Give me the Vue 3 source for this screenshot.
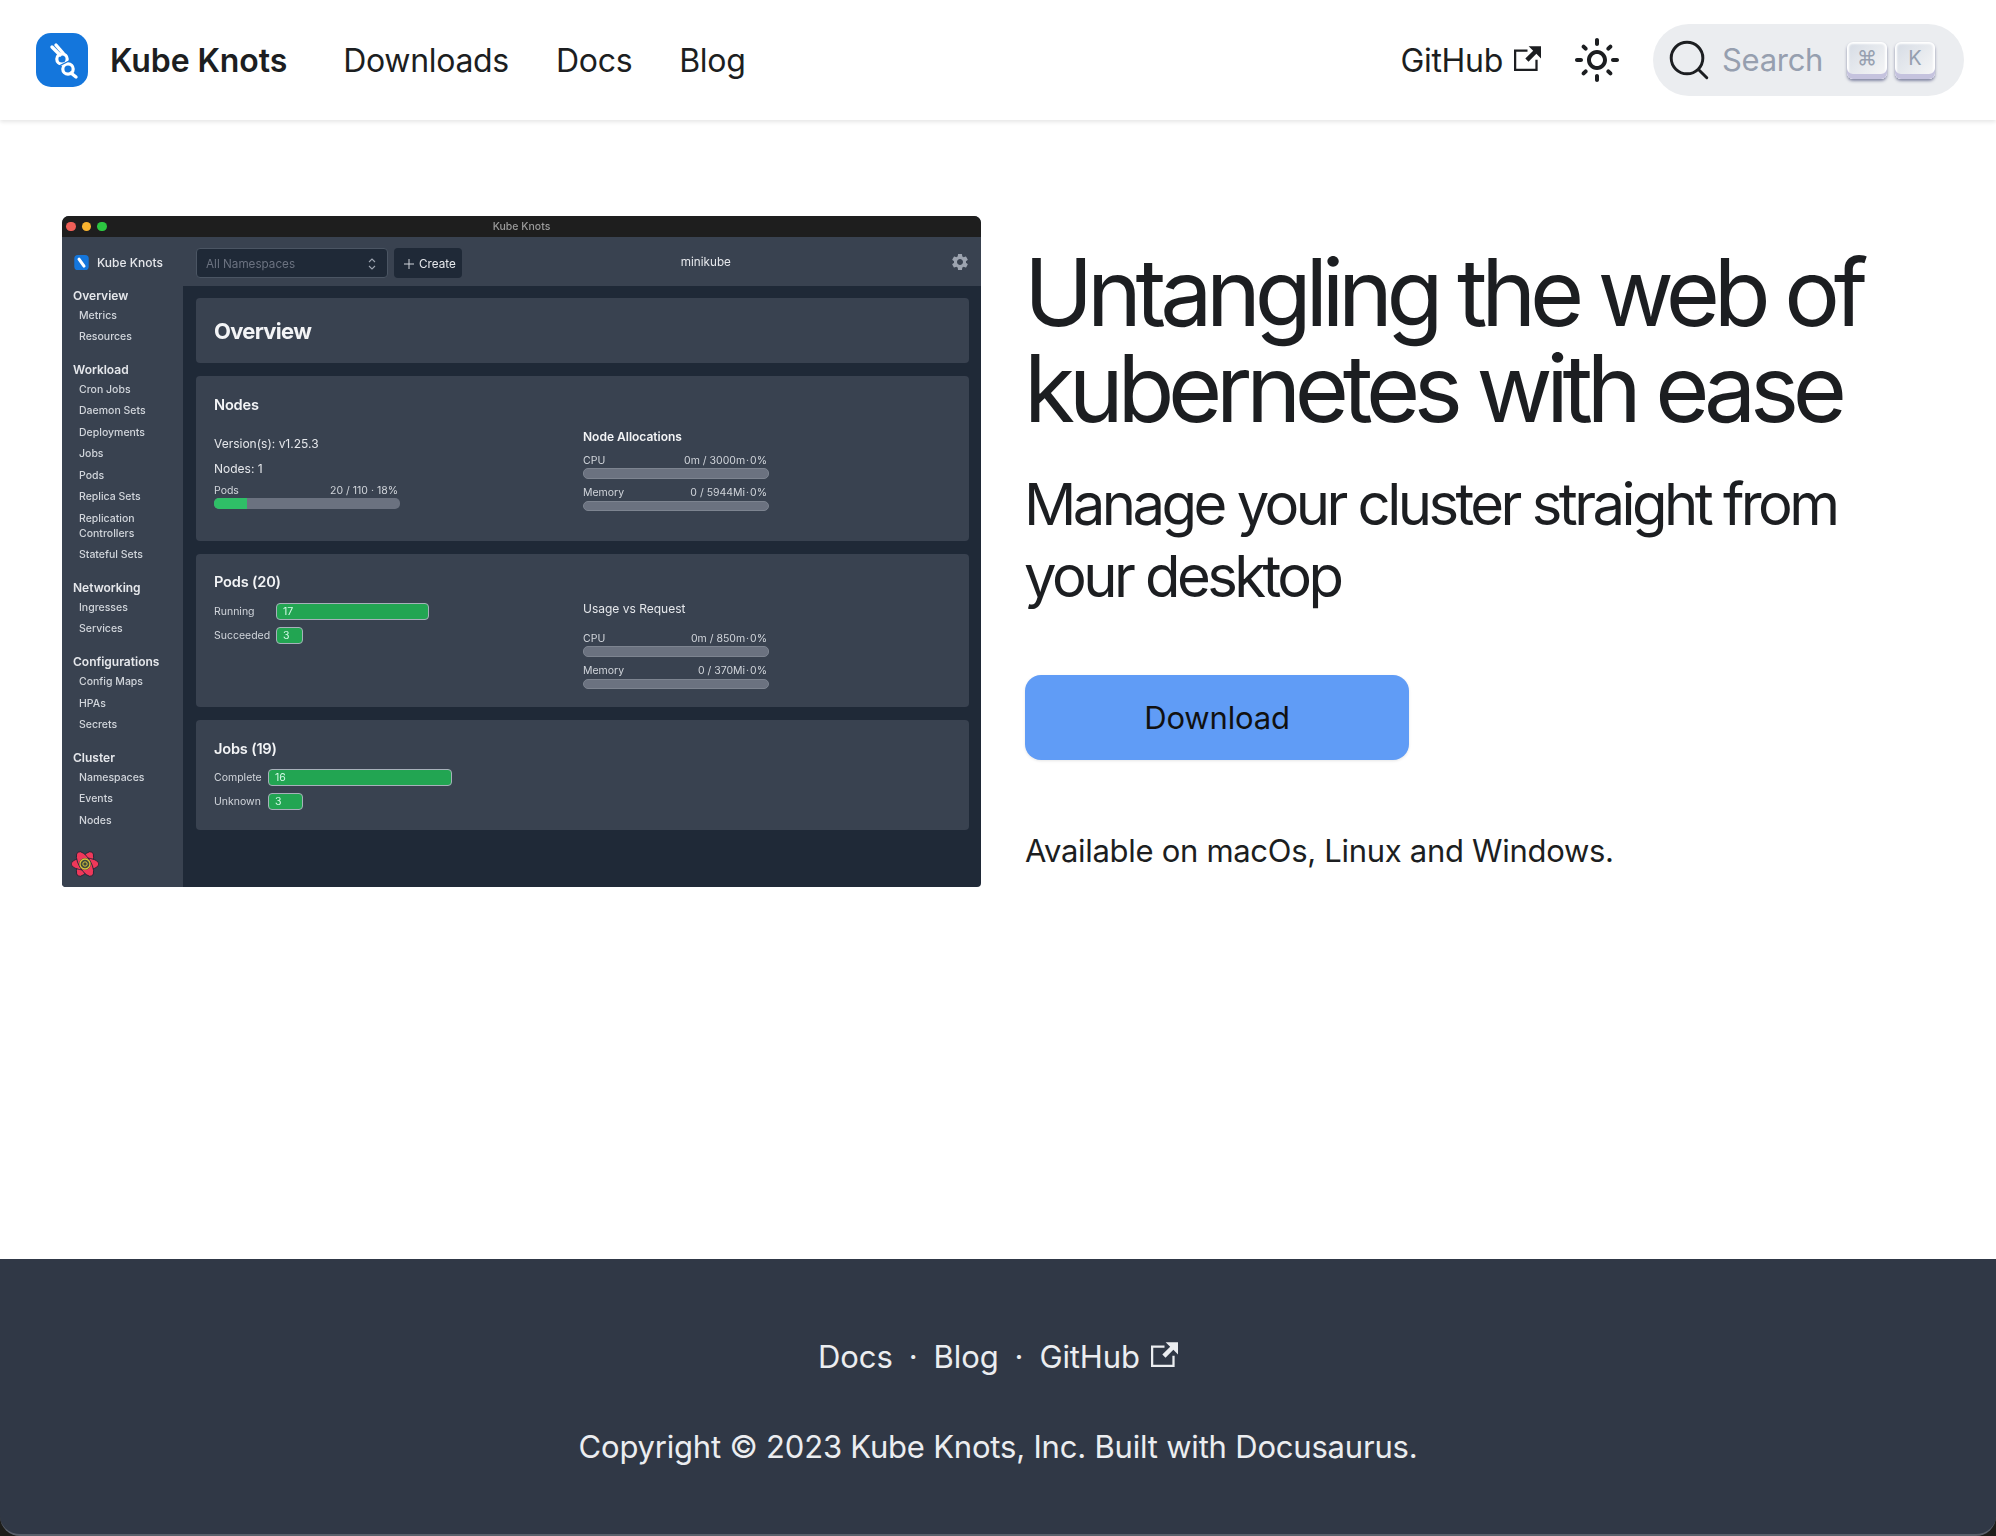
<template>
  <div class="page">
    <nav class="navbar">
      <div class="nav-left">
        <a class="brand">
          <svg class="logo" viewBox="0 0 52 54">
            <rect width="52" height="54" rx="15" fill="#1476dc" />
            <g fill="none" stroke="#fff" stroke-linecap="round">
              <path d="M16 14 L24 22 M20 12 L27 20 M35 40 L40 44" stroke-width="3.4" />
              <circle cx="26" cy="26" r="5.2" stroke-width="3.2" />
              <circle cx="32" cy="36" r="5.2" stroke-width="3.2" />
            </g>
            <path d="M23 33 L33 28" stroke="#1476dc" stroke-width="1.3" />
          </svg>
          <span class="brand-name">Kube Knots</span>
        </a>
        <a v-for="link in navLinks" :key="link" class="nav-link">{{ link }}</a>
      </div>
      <div class="nav-right">
        <a class="nav-link github">GitHub
          <svg class="ext" viewBox="0 0 24 24"><path fill="currentColor" d="M21 13v10h-21v-19h12v2h-10v15h17v-8h2zm3-12h-10.988l4.035 4-6.977 7.07 2.828 2.828 6.977-7.07 4.125 4.172v-11z" /></svg>
        </a>
        <svg class="sun" viewBox="0 0 24 24"><path fill="currentColor" d="M12,9c1.65,0,3,1.35,3,3s-1.35,3-3,3s-3-1.35-3-3S10.35,9,12,9 M12,7c-2.76,0-5,2.24-5,5s2.24,5,5,5s5-2.24,5-5 S14.76,7,12,7L12,7z M2,13l2,0c0.55,0,1-0.45,1-1s-0.45-1-1-1l-2,0c-0.55,0-1,0.45-1,1S1.45,13,2,13z M20,13l2,0c0.55,0,1-0.45,1-1 s-0.45-1-1-1l-2,0c-0.55,0-1,0.45-1,1S19.45,13,20,13z M11,2v2c0,0.55,0.45,1,1,1s1-0.45,1-1V2c0-0.55-0.45-1-1-1S11,1.45,11,2z M11,20v2c0,0.55,0.45,1,1,1s1-0.45,1-1v-2c0-0.55-0.45-1-1-1C11.45,19,11,19.45,11,20z M5.99,4.58c-0.39-0.39-1.03-0.39-1.41,0 c-0.39,0.39-0.39,1.03,0,1.41l1.06,1.06c0.39,0.39,1.03,0.39,1.41,0s0.39-1.03,0-1.41L5.99,4.58z M18.36,16.95 c-0.39-0.39-1.03-0.39-1.41,0c-0.39,0.39-0.39,1.03,0,1.41l1.06,1.06c0.39,0.39,1.03,0.39,1.41,0c0.39-0.39,0.39-1.03,0-1.41 L18.36,16.95z M19.42,5.99c0.39-0.39,0.39-1.03,0-1.41c-0.39-0.39-1.03-0.39-1.41,0l-1.06,1.06c-0.39,0.39-0.39,1.03,0,1.41 s1.03,0.39,1.41,0L19.42,5.99z M7.05,18.36c0.39-0.39,0.39-1.03,0-1.41c-0.39-0.39-1.03-0.39-1.41,0l-1.06,1.06 c-0.39,0.39-0.39,1.03,0,1.41s1.03,0.39,1.41,0L7.05,18.36z" /></svg>
        <div class="search">
          <svg class="search-icon" viewBox="0 0 20 20"><path d="M14.386 14.386l4.0877 4.0877-4.0877-4.0877c-2.9418 2.9419-7.7115 2.9419-10.6533 0-2.9419-2.9418-2.9419-7.7115 0-10.6533 2.9418-2.9419 7.7115-2.9419 10.6533 0 2.9419 2.9418 2.9419 7.7115 0 10.6533z" stroke="currentColor" fill="none" fill-rule="evenodd" stroke-linecap="round" stroke-linejoin="round" /></svg>
          <span class="search-text">Search</span>
          <span class="keys">
            <kbd class="key">⌘</kbd>
            <kbd class="key">K</kbd>
          </span>
        </div>
      </div>
    </nav>

    <main class="hero">
      <div class="shot">
        <div class="titlebar">
          <div class="lights">
            <i class="light red"></i>
            <i class="light yellow"></i>
            <i class="light green"></i>
          </div>
          <span class="window-title">Kube Knots</span>
        </div>
        <div class="app">
          <aside class="sidebar">
            <div class="side-brand">
              <svg class="side-logo" viewBox="0 0 52 54">
                <rect width="52" height="54" rx="13" fill="#1476dc" />
                <path d="M17 15 L35 40" stroke="#fff" stroke-width="11" stroke-linecap="round" />
              </svg>
              <span>Kube Knots</span>
            </div>
            <div v-for="group in sideGroups" :key="group.title" class="side-group">
              <div class="side-title">{{ group.title }}</div>
              <div v-for="item in group.items" :key="item" class="side-item">{{ item }}</div>
            </div>
            <svg class="atom" viewBox="0 0 28 28">
              <g fill="#f0385a" stroke="#1b2535" stroke-width=".8">
                <ellipse cx="14" cy="14" rx="6" ry="13.8" transform="rotate(30 14 14)" />
                <ellipse cx="14" cy="14" rx="6" ry="13.8" transform="rotate(90 14 14)" />
                <ellipse cx="14" cy="14" rx="6" ry="13.8" transform="rotate(150 14 14)" />
              </g>
              <circle cx="14" cy="14" r="6" fill="#3d4a3c" />
              <circle cx="14" cy="14" r="5" fill="none" stroke="#d9c23a" stroke-width="1.3" />
              <circle cx="14" cy="14" r="2.2" fill="none" stroke="#d9c23a" stroke-width="1" />
            </svg>
          </aside>
          <div class="app-body">
            <div class="toolbar">
              <div class="select">
                <span>All Namespaces</span>
                <svg class="updown" viewBox="0 0 10 16"><path d="M2 6 L5 3 L8 6 M2 10 L5 13 L8 10" fill="none" stroke="#9ca3af" stroke-width="1.1" /></svg>
              </div>
              <div class="create">
                <svg class="plus" viewBox="0 0 12 12"><path d="M6 1 V11 M1 6 H11" stroke="#d1d5db" stroke-width="1" /></svg>
                <span>Create</span>
              </div>
              <span class="cluster">minikube</span>
              <svg class="gear" viewBox="0 0 24 24"><path fill="#9ca3af" d="M19.14 12.94c.04-.3.06-.61.06-.94 0-.32-.02-.64-.07-.94l2.03-1.58a.49.49 0 0 0 .12-.61l-1.92-3.32a.488.488 0 0 0-.59-.22l-2.39.96c-.5-.38-1.03-.7-1.62-.94l-.36-2.54a.484.484 0 0 0-.48-.41h-3.84c-.24 0-.43.17-.47.41l-.36 2.54c-.59.24-1.13.57-1.62.94l-2.39-.96c-.22-.08-.47 0-.59.22L2.74 8.87c-.12.21-.08.47.12.61l2.03 1.58c-.05.3-.09.63-.09.94s.02.64.07.94l-2.03 1.58a.49.49 0 0 0-.12.61l1.92 3.32c.12.22.37.29.59.22l2.39-.96c.5.38 1.03.7 1.62.94l.36 2.54c.05.24.24.41.48.41h3.84c.24 0 .44-.17.47-.41l.36-2.54c.59-.24 1.13-.56 1.62-.94l2.39.96c.22.08.47 0 .59-.22l1.92-3.32c.12-.22.07-.47-.12-.61l-2.01-1.58zM12 15.6c-1.98 0-3.6-1.62-3.6-3.6s1.62-3.6 3.6-3.6 3.6 1.62 3.6 3.6-1.62 3.6-3.6 3.6z" /></svg>
            </div>
            <div class="content">
              <section class="card overview"><h2>Overview</h2></section>

              <section class="card nodes">
                <div class="col">
                  <h3>Nodes</h3>
                  <p class="line first">Version(s): v1.25.3</p>
                  <p class="line">Nodes: 1</p>
                  <div class="meter pods-meter">
                    <div class="meter-label"><span>Pods</span><span>20 / 110 · 18%</span></div>
                    <div class="track"><div class="fill" :style="{ width: '18%' }"></div></div>
                  </div>
                </div>
                <div class="col side-col alloc">
                  <h4>Node Allocations</h4>
                  <div v-for="m in allocations" :key="m.label" class="meter">
                    <div class="meter-label"><span>{{ m.label }}</span><span>{{ m.value }}</span></div>
                    <div class="track small"></div>
                  </div>
                </div>
              </section>

              <section class="card pods">
                <div class="col">
                  <h3>Pods (20)</h3>
                  <div class="status-list pod-list">
                    <div v-for="s in podStatus" :key="s.label" class="status">
                      <span class="status-label">{{ s.label }}</span>
                      <span class="chip" :style="{ width: s.width + 'px' }">{{ s.count }}</span>
                    </div>
                  </div>
                </div>
                <div class="col side-col usage">
                  <div class="usage-title">Usage vs Request</div>
                  <div v-for="m in usage" :key="m.label" class="meter">
                    <div class="meter-label"><span>{{ m.label }}</span><span>{{ m.value }}</span></div>
                    <div class="track small"></div>
                  </div>
                </div>
              </section>

              <section class="card jobs">
                <h3>Jobs (19)</h3>
                <div class="status-list job-list">
                  <div v-for="s in jobStatus" :key="s.label" class="status">
                    <span class="status-label">{{ s.label }}</span>
                    <span class="chip" :style="{ width: s.width + 'px' }">{{ s.count }}</span>
                  </div>
                </div>
              </section>
            </div>
          </div>
        </div>
      </div>

      <div class="pitch">
        <h1>Untangling the web of kubernetes with ease</h1>
        <p class="sub">Manage your cluster straight from your desktop</p>
        <button class="download">Download</button>
        <p class="avail">Available on macOs, Linux and Windows.</p>
      </div>
    </main>

    <div class="footer-wrap">
      <footer class="footer">
        <div class="foot-links">
          <a>Docs</a>
          <span class="sep">·</span>
          <a>Blog</a>
          <span class="sep">·</span>
          <a class="github">GitHub
            <svg class="ext" viewBox="0 0 24 24"><path fill="currentColor" d="M21 13v10h-21v-19h12v2h-10v15h17v-8h2zm3-12h-10.988l4.035 4-6.977 7.07 2.828 2.828 6.977-7.07 4.125 4.172v-11z" /></svg>
          </a>
        </div>
        <div class="copyright">Copyright © 2023 Kube Knots, Inc. Built with Docusaurus.</div>
      </footer>
    </div>
  </div>
</template>

<script setup>
const navLinks = ['Downloads', 'Docs', 'Blog'];

const sideGroups = [
  { title: 'Overview', items: ['Metrics', 'Resources'] },
  {
    title: 'Workload',
    items: ['Cron Jobs', 'Daemon Sets', 'Deployments', 'Jobs', 'Pods', 'Replica Sets', 'Replication Controllers', 'Stateful Sets'],
  },
  { title: 'Networking', items: ['Ingresses', 'Services'] },
  { title: 'Configurations', items: ['Config Maps', 'HPAs', 'Secrets'] },
  { title: 'Cluster', items: ['Namespaces', 'Events', 'Nodes'] },
];

const allocations = [
  { label: 'CPU', value: '0m / 3000m\u200a·\u200a0%' },
  { label: 'Memory', value: '0 / 5944Mi\u200a·\u200a0%' },
];

const usage = [
  { label: 'CPU', value: '0m / 850m\u200a·\u200a0%' },
  { label: 'Memory', value: '0 / 370Mi\u200a·\u200a0%' },
];

const podStatus = [
  { label: 'Running', count: 17, width: 153 },
  { label: 'Succeeded', count: 3, width: 27 },
];

const jobStatus = [
  { label: 'Complete', count: 16, width: 184 },
  { label: 'Unknown', count: 3, width: 35 },
];
</script>

<style>
html,
body {
  margin: 0;
  background: #fff;
}
</style>

<style scoped>
.page {
  width: 1996px;
  height: 1536px;
  display: flex;
  flex-direction: column;
  font-family: Inter, "Noto Sans", sans-serif;
  color: #1c1e21;
  background: #fff;
  overflow: hidden;
}

a {
  color: inherit;
  text-decoration: none;
}

/* navbar */
.navbar {
  height: 120px;
  flex: none;
  box-sizing: border-box;
  display: flex;
  justify-content: space-between;
  align-items: center;
  padding: 0 32px 0 36px;
  box-shadow: 0 2px 4px rgba(0, 0, 0, 0.1);
}
.nav-left,
.nav-right {
  display: flex;
  align-items: center;
}
.brand {
  display: flex;
  align-items: center;
  margin-right: 56px;
}
.logo {
  width: 52px;
  height: 54px;
}
.brand-name {
  margin-left: 22px;
  font-size: 32px;
  font-weight: 600;
  letter-spacing: -0.1px;
}
.nav-link {
  font-size: 32px;
  margin-right: 47px;
  letter-spacing: -0.3px;
}
.nav-right .nav-link {
  margin-right: 32px;
}
.github {
  display: inline-flex;
  align-items: center;
}
.ext {
  width: 27px;
  height: 27px;
  margin-left: 11px;
  margin-top: -3px;
}
.sun {
  width: 48px;
  height: 48px;
  margin-right: 32px;
}
.search {
  width: 311px;
  height: 72px;
  box-sizing: border-box;
  padding: 0 29px 0 15px;
  border-radius: 36px;
  background: #ebedf0;
  display: flex;
  align-items: center;
}
.search-icon {
  width: 42px;
  height: 42px;
  color: #1c1e21;
  stroke-width: 1.4;
}
.search-text {
  margin: -2px 0 0 12px;
  font-size: 31px;
  letter-spacing: -0.3px;
  color: #969faf;
}
.keys {
  margin-left: auto;
  display: flex;
  gap: 8px;
}
.key {
  width: 40px;
  height: 37px;
  box-sizing: border-box;
  padding-bottom: 4px;
  display: flex;
  align-items: center;
  justify-content: center;
  border-radius: 6px;
  font-family: Inter, "DejaVu Sans", sans-serif;
  font-size: 20px;
  color: #969faf;
  background: linear-gradient(-225deg, #d5dbe4, #f8f8f8);
  box-shadow: inset 0 -5px 0 0 #c5c3de, inset 0 0 2px 2px #fff, 0 2px 3px 0 rgba(30, 35, 90, 0.5);
}

/* hero */
.hero {
  flex: 1;
  display: flex;
  align-items: flex-start;
  padding: 96px 0 0 62px;
}

/* app screenshot */
.shot {
  width: 919px;
  height: 671px;
  flex: none;
  display: flex;
  flex-direction: column;
  border-radius: 7px 7px 4px 4px;
  overflow: hidden;
  background: #1f2937;
  color: #e5e7eb;
  filter: blur(0.35px);
}
.titlebar {
  height: 21px;
  flex: none;
  position: relative;
  background: #1e1e1e;
  display: flex;
  align-items: center;
  justify-content: center;
}
.lights {
  position: absolute;
  left: 4px;
  top: 5.5px;
  display: flex;
  gap: 6px;
}
.light {
  width: 9.5px;
  height: 9.5px;
  border-radius: 50%;
}
.red { background: #ee5f57; }
.yellow { background: #f9b42f; }
.green { background: #2cc641; }
.window-title {
  font-size: 10.5px;
  font-weight: 500;
  color: #9b9b9b;
}
.app {
  flex: 1;
  display: flex;
  min-height: 0;
}
.sidebar {
  width: 121px;
  flex: none;
  box-sizing: border-box;
  padding: 18px 0 0 11px;
  background: #394250;
  position: relative;
}
.side-brand {
  display: flex;
  align-items: center;
  gap: 8px;
  height: 15px;
  margin: 0 0 17.5px 1px;
  font-size: 12px;
  font-weight: 500;
}
.side-logo {
  width: 15px;
  height: 15px;
}
.side-group {
  margin-bottom: 15.2px;
}
.side-title {
  font-size: 12px;
  line-height: 16px;
  font-weight: 600;
}
.side-item {
  font-size: 10.5px;
  line-height: 15px;
  padding: 4.2px 0 2.3px 6px;
  width: 80px;
  font-weight: 500;
  color: #d1d5db;
}
.atom {
  position: absolute;
  left: 9px;
  top: 613px;
  width: 28px;
  height: 28px;
}
.app-body {
  flex: 1;
  display: flex;
  flex-direction: column;
  min-width: 0;
}
.toolbar {
  height: 49px;
  flex: none;
  box-sizing: border-box;
  padding: 11px 11px 0 13px;
  background: #394250;
  display: flex;
  align-items: flex-start;
  font-size: 11.7px;
}
.select {
  width: 192px;
  height: 30px;
  box-sizing: border-box;
  padding: 1.5px 10px 0 9px;
  display: flex;
  align-items: center;
  justify-content: space-between;
  background: #1f2937;
  border: 1px solid #4b5563;
  border-radius: 4px;
  color: #6b7280;
}
.updown {
  width: 10px;
  height: 16px;
}
.create {
  height: 30px;
  box-sizing: border-box;
  margin-left: 6px;
  padding: 1.5px 6px 0 9px;
  display: flex;
  align-items: center;
  gap: 4px;
  background: #1f2937;
  border-radius: 4px;
  color: #e5e7eb;
}
.plus {
  width: 12px;
  height: 12px;
}
.cluster {
  margin: 7px 0 0 219px;
  color: #e5e7eb;
}
.gear {
  margin: 4px 0 0 auto;
  width: 20px;
  height: 20px;
}
.content {
  flex: 1;
  box-sizing: border-box;
  padding: 12px 12px 0 13px;
  display: flex;
  flex-direction: column;
  gap: 13px;
}
.card {
  box-sizing: border-box;
  padding: 0 18px;
  background: #394250;
  border-radius: 4px;
}
.overview {
  height: 65px;
  display: flex;
  align-items: center;
}
h2 {
  margin: 0;
  font-size: 22px;
  font-weight: 700;
  color: #f3f4f6;
  letter-spacing: -0.7px;
}
h3 {
  margin: 0;
  font-size: 14.6px;
  line-height: 18px;
  font-weight: 600;
  color: #f3f4f6;
  letter-spacing: -0.2px;
}
h4 {
  margin: 0;
  font-size: 12px;
  line-height: 16px;
  font-weight: 600;
  color: #f3f4f6;
}
.nodes {
  height: 165px;
  padding-top: 19.5px;
  display: flex;
}
.col {
  width: 186px;
  flex: none;
}
.side-col {
  margin-left: 183px;
}
.line {
  margin: 0;
  font-size: 12px;
  line-height: 16px;
  color: #e5e7eb;
}
.line.first {
  margin-top: 22px;
}
.line + .line {
  margin-top: 9px;
}
.meter {
  margin-top: 8.5px;
}
.meter + .meter {
  margin-top: 7.5px;
}
.meter-label {
  display: flex;
  justify-content: space-between;
  padding-right: 2px;
  margin-bottom: 1.5px;
  font-size: 10.5px;
  line-height: 13px;
  color: #d1d5db;
}
.track {
  height: 11px;
  border-radius: 5px;
  background: #6b7280;
  overflow: hidden;
}
.track.small {
  height: 10.5px;
  box-sizing: border-box;
  border: 1px solid #7d8490;
}
.fill {
  height: 100%;
  background: #2fbf67;
}
.pods-meter {
  margin-top: 7px;
}
.alloc {
  padding-top: 33.5px;
}
.pods {
  height: 153px;
  padding-top: 19px;
  display: flex;
}
.usage {
  padding-top: 28px;
}
.usage-title {
  font-size: 12px;
  line-height: 16px;
  color: #e5e7eb;
  margin-bottom: 14.5px;
}
.status-list {
  display: flex;
  flex-direction: column;
  gap: 6.5px;
}
.pod-list {
  margin-top: 12px;
}
.job-list {
  margin-top: 11px;
}
.status {
  display: flex;
  align-items: center;
  font-size: 10.5px;
  height: 17px;
  color: #d1d5db;
}
.status-label {
  flex: none;
}
.pod-list .status-label {
  width: 62px;
}
.job-list .status-label {
  width: 54px;
}
.chip {
  height: 17px;
  flex: none;
  box-sizing: border-box;
  padding-left: 6px;
  display: flex;
  align-items: center;
  border: 1px solid #a7b0ba;
  border-radius: 4px;
  background: #22a552;
  color: #d1fae5;
}
.jobs {
  height: 110px;
  padding-top: 20px;
}

/* right column */
.pitch {
  margin-left: 43px;
  width: 880px;
}
h1 {
  margin: 28px 0 0;
  font-size: 93px;
  line-height: 96px;
  font-weight: 400;
  letter-spacing: -6.3px;
  color: #1c1e21;
}
.sub {
  margin: 32px 0 0;
  font-size: 58px;
  line-height: 72px;
  letter-spacing: -3.55px;
}
.download {
  display: block;
  margin-top: 63px;
  margin-left: 1px;
  width: 384px;
  height: 85px;
  border: 0;
  border-radius: 16px;
  background: #609cf6;
  font-family: inherit;
  font-size: 31px;
  letter-spacing: -0.15px;
  color: #111;
  box-shadow: 0 1px 3px rgba(0, 0, 0, 0.1);
}
.avail {
  margin: 69px 0 0 1px;
  font-size: 31px;
  letter-spacing: -0.3px;
  line-height: 44px;
}

/* footer */
.footer-wrap {
  height: 277px;
  flex: none;
  background: linear-gradient(#fff 50%, #1d1d1a 50%);
}
.footer {
  height: 100%;
  box-sizing: border-box;
  padding-top: 72px;
  background: #303846;
  color: #ebedf0;
  font-size: 31px;
  text-align: center;
  border-bottom: 2px solid #5a606b;
  border-radius: 0 0 20px 20px;
}
.foot-links {
  display: flex;
  justify-content: center;
  align-items: center;
  height: 50px;
  letter-spacing: -0.1px;
}
.sep {
  margin: 0 16px;
}
.copyright {
  margin-top: 41px;
  line-height: 50px;
  letter-spacing: -0.2px;
}
</style>
